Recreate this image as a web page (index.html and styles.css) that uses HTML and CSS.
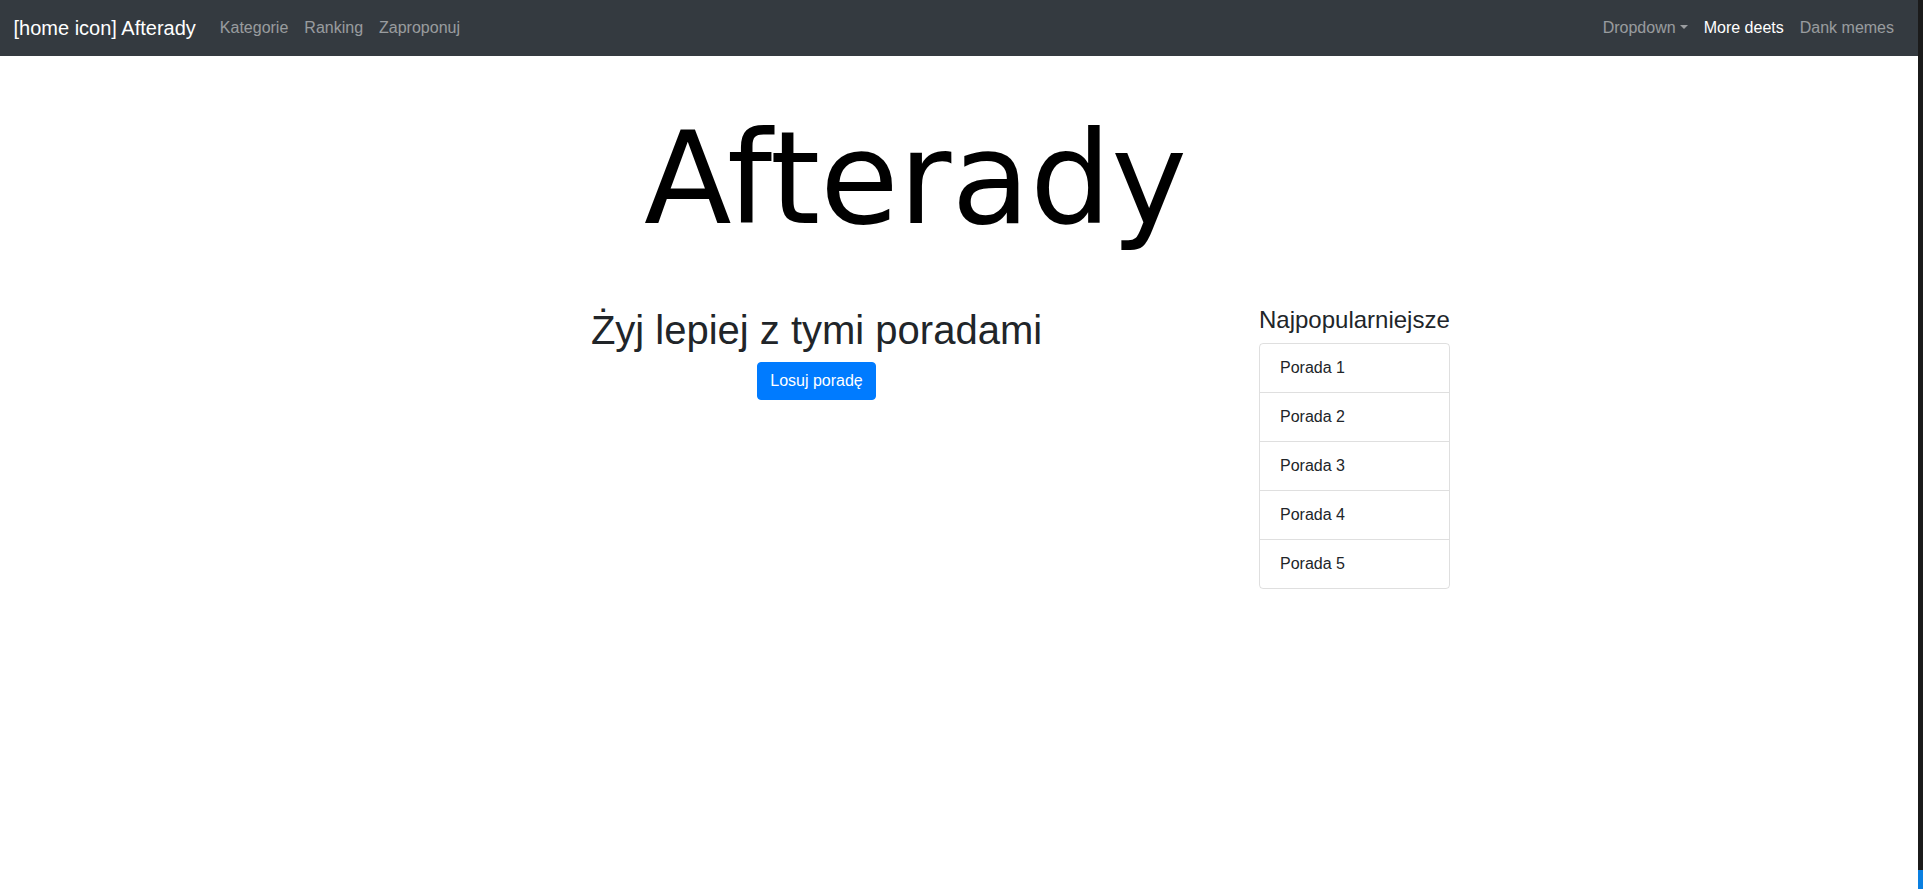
FILE: index.html
```html
<!DOCTYPE html>
<html lang="pl">
<head>
<meta charset="utf-8">
<title>Afterady</title>
<link rel="stylesheet" href="styles.css">
</head>
<body>
<div class="page">
  <nav class="navbar">
    <a class="brand" href="#">[home icon] Afterady</a>
    <ul class="nav nav-left">
      <li><a class="nav-link" href="#">Kategorie</a></li>
      <li><a class="nav-link" href="#">Ranking</a></li>
      <li><a class="nav-link" href="#">Zaproponuj</a></li>
    </ul>
    <ul class="nav nav-right">
      <li><a class="nav-link dropdown-toggle" href="#">Dropdown</a></li>
      <li><a class="nav-link active" href="#">More deets</a></li>
      <li><a class="nav-link" href="#">Dank memes</a></li>
    </ul>
  </nav>
  <header class="logo">Afterady</header>
  <div class="container">
    <div class="row">
      <section class="col-main">
        <h1 class="lead-title">Żyj lepiej z tymi poradami</h1>
        <button class="btn-primary" type="button">Losuj poradę</button>
      </section>
      <aside class="col-side">
        <h4 class="side-title">Najpopularniejsze</h4>
        <ul class="list-group">
          <li class="list-item">Porada 1</li>
          <li class="list-item">Porada 2</li>
          <li class="list-item">Porada 3</li>
          <li class="list-item">Porada 4</li>
          <li class="list-item">Porada 5</li>
        </ul>
      </aside>
    </div>
  </div>
</div>
<div class="edge-strip"><div class="edge-dark"></div><div class="edge-blue"></div></div>
</body>
</html>
```
FILE: styles.css
```css
* { box-sizing: border-box; }
html, body { margin: 0; padding: 0; }
body {
  display: flex;
  height: 889px;
  overflow: hidden;
  font-family: "Liberation Sans", Arial, sans-serif;
  font-size: 16px;
  line-height: 1.5;
  color: #212529;
  background: #fff;
}
.page { flex: 1; min-width: 0; }
.edge-strip { width: 5px; display: flex; flex-direction: column; }
.edge-dark { flex: 1; background: #1b1b1b; }
.edge-blue { height: 19px; background: #0a7fe0; }

.navbar {
  display: flex;
  align-items: center;
  background: #343a40;
  padding: 8px 16px 8px 13.5px;
  height: 56px;
}
.brand {
  color: #fff;
  text-decoration: none;
  font-size: 20px;
  line-height: 30px;
  padding: 5px 0;
  margin-right: 16px;
  white-space: nowrap;
}
.nav { display: flex; list-style: none; margin: 0; padding: 0; }
.nav-right { margin-left: auto; }
.nav-link {
  display: block;
  padding: 8px;
  color: rgba(255,255,255,.5);
  text-decoration: none;
  line-height: 24px;
}
.nav-link.active { color: #fff; }
.dropdown-toggle::after {
  content: "";
  display: inline-block;
  margin-left: .255em;
  vertical-align: .255em;
  border-top: .3em solid;
  border-right: .3em solid transparent;
  border-left: .3em solid transparent;
  border-bottom: 0;
}

.logo {
  font-family: "DejaVu Sans", sans-serif;
  font-size: 128px;
  line-height: 150px;
  color: #000;
  text-align: center;
  padding: 48px 87px 0 0;
  margin-bottom: 52px;
}

.container { width: 1140px; margin: 0 auto; padding: 0 15px; }
.row { display: flex; margin: 0 -15px; }
.col-main { width: 855px; padding: 0 15px; text-align: center; }
.col-side { padding: 0 15px; }
.lead-title {
  margin: 0 0 8px;
  font-size: 40px;
  font-weight: 500;
  line-height: 1.2;
}
.btn-primary {
  font-family: inherit;
  font-size: 16px;
  line-height: 1.5;
  padding: 6px 12px;
  color: #fff;
  background: #007bff;
  border: 1px solid #007bff;
  border-radius: 4px;
}
.side-title {
  margin: 0 0 8px;
  font-size: 24px;
  font-weight: 500;
  line-height: 1.2;
  white-space: nowrap;
}
.list-group {
  list-style: none;
  margin: 0;
  padding: 0;
  border: 1px solid rgba(0,0,0,.125);
  border-radius: 4px;
}
.list-item {
  padding: 12px 20px;
  line-height: 24px;
  border-top: 1px solid rgba(0,0,0,.125);
}
.list-item:first-child { border-top: 0; }
```
